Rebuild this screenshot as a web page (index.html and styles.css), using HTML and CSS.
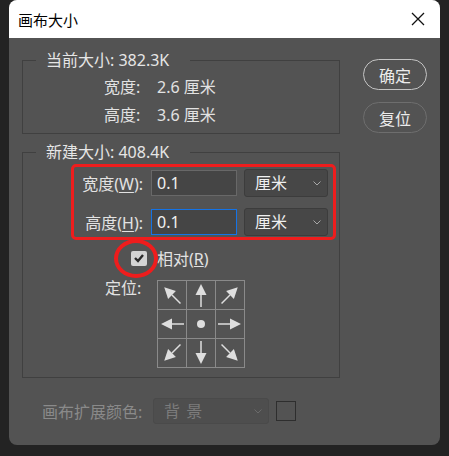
FILE: index.html
```html
<!DOCTYPE html>
<html lang="zh-CN">
<head>
	<meta charset="UTF-8">
	<title>画布大小</title>
	<link rel="stylesheet" href="styles.css">
</head>
<body>
	<div class="dialog">
		<!-- title -->
		<div class="dialog-title">
			<span>画布大小</span>
			<svg class="close" width="14" height="14" viewBox="0 0 14 14">
				<path d="M1 1 L13 13 M13 1 L1 13" stroke="#111" stroke-width="1.3" fill="none"/>
			</svg>
		</div>

		<div class="dialog-body">
			<div class="main">
				<!-- 当前大小 -->
				<fieldset class="group group-current">
					<legend>当前大小: 382.3K</legend>
					<div class="info-row"><span class="info-label">宽度:</span><span>2.6 厘米</span></div>
					<div class="info-row"><span class="info-label">高度:</span><span>3.6 厘米</span></div>
				</fieldset>

				<!-- 新建大小 -->
				<fieldset class="group group-new">
					<legend>新建大小: 408.4K</legend>
					<div class="mark-box">
						<div class="field-row">
							<span class="field-label">宽度(<u>W</u>):</span>
							<div class="input">0.1</div>
							<div class="select">厘米
								<svg class="chevron" width="8" height="5" viewBox="0 0 8 5"><path d="M0.5 0.5 L4 4 L7.5 0.5" stroke="#a8a8a8" fill="none"/></svg>
							</div>
						</div>
						<div class="field-row">
							<span class="field-label">高度(<u>H</u>):</span>
							<div class="input input-focus">0.1</div>
							<div class="select">厘米
								<svg class="chevron" width="8" height="5" viewBox="0 0 8 5"><path d="M0.5 0.5 L4 4 L7.5 0.5" stroke="#a8a8a8" fill="none"/></svg>
							</div>
						</div>
					</div>

					<div class="check-row">
						<span class="checkbox">
							<svg width="12" height="10" viewBox="0 0 12 10"><path d="M2 5 L5 8 L10 2" stroke="#2b2b2b" stroke-width="2.4" fill="none"/></svg>
							<span class="mark-circle"></span>
						</span>
						<span>相对(<u>R</u>)</span>
					</div>

					<div class="anchor-row">
						<span class="anchor-label">定位:</span>
						<div class="anchor-grid">
							<div class="cell"><svg width="28" height="28" viewBox="0 0 28 28"><g transform="rotate(-45 14 14)"><path d="M14 14 L14 26" class="shaft"/><path d="M14 3 L19.5 14 L8.5 14 Z" class="head"/></g></svg></div>
							<div class="cell"><svg width="28" height="28" viewBox="0 0 28 28"><g><path d="M14 14 L14 26" class="shaft"/><path d="M14 3 L19.5 14 L8.5 14 Z" class="head"/></g></svg></div>
							<div class="cell"><svg width="28" height="28" viewBox="0 0 28 28"><g transform="rotate(45 14 14)"><path d="M14 14 L14 26" class="shaft"/><path d="M14 3 L19.5 14 L8.5 14 Z" class="head"/></g></svg></div>
							<div class="cell"><svg width="28" height="28" viewBox="0 0 28 28"><g transform="rotate(-90 14 14)"><path d="M14 14 L14 26" class="shaft"/><path d="M14 3 L19.5 14 L8.5 14 Z" class="head"/></g></svg></div>
							<div class="cell"><svg width="28" height="28" viewBox="0 0 28 28"><circle cx="14" cy="14" r="4" class="head"/></svg></div>
							<div class="cell"><svg width="28" height="28" viewBox="0 0 28 28"><g transform="rotate(90 14 14)"><path d="M14 14 L14 26" class="shaft"/><path d="M14 3 L19.5 14 L8.5 14 Z" class="head"/></g></svg></div>
							<div class="cell"><svg width="28" height="28" viewBox="0 0 28 28"><g transform="rotate(-135 14 14)"><path d="M14 14 L14 26" class="shaft"/><path d="M14 3 L19.5 14 L8.5 14 Z" class="head"/></g></svg></div>
							<div class="cell"><svg width="28" height="28" viewBox="0 0 28 28"><g transform="rotate(180 14 14)"><path d="M14 14 L14 26" class="shaft"/><path d="M14 3 L19.5 14 L8.5 14 Z" class="head"/></g></svg></div>
							<div class="cell"><svg width="28" height="28" viewBox="0 0 28 28"><g transform="rotate(135 14 14)"><path d="M14 14 L14 26" class="shaft"/><path d="M14 3 L19.5 14 L8.5 14 Z" class="head"/></g></svg></div>
						</div>
					</div>
				</fieldset>

				<!-- 画布扩展颜色 -->
				<div class="ext-row">
					<span class="ext-label">画布扩展颜色:</span>
					<div class="select select-disabled">背 景
						<svg class="chevron" width="8" height="5" viewBox="0 0 8 5"><path d="M0.5 0.5 L4 4 L7.5 0.5" stroke="#6a6a6a" fill="none"/></svg>
					</div>
					<span class="swatch"></span>
				</div>
			</div>

			<!-- buttons -->
			<div class="actions">
				<button class="btn btn-primary">确定</button>
				<button class="btn">复位</button>
			</div>
		</div>
	</div>
</body>
</html>
```

FILE: styles.css
```css
html,
body {
	margin: 0;
	padding: 0;
}

body {
	background: #232323;
	padding: 0 9px;
	font-family: "Noto Sans", "Noto Sans CJK SC", sans-serif;
	font-size: 16px;
	color: #e2e2e2;
}

* {
	box-sizing: border-box;
}

/* dialog */
.dialog {
	height: 445px;
	background: #535353;
	border-radius: 8px;
	overflow: hidden;
}

.dialog-title {
	height: 38px;
	background: #fff;
	display: flex;
	align-items: center;
	justify-content: space-between;
	padding: 0 15px 0 9px;
	font-size: 15px;
	color: #000;
}

.close {
	display: block;
	margin-top: -1px;
}

.dialog-body {
	display: flex;
	padding: 0 13px;
}

.main {
	width: 318px;
}

/* 分组框 */
.group {
	margin: 11px 0 0;
	padding: 2px 0 4px;
	border: 1px solid #404040;
	min-width: 0;
}

.group legend {
	width: 154px;
	margin-left: 13px;
	padding: 0 0 0 10px;
	line-height: 22px;
	height: 22px;
	color: #e6e6e6;
}

.group-new {
	margin-top: 7px;
	padding: 1px 0 9px;
}

.info-row {
	display: flex;
	line-height: 28px;
	padding-left: 81px;
}

.info-label {
	width: 53px;
}

/* 红框 */
.mark-box {
	margin: 0 3px 0 48px;
	border: 3px solid #ee1d1d;
	border-radius: 5px;
	padding: 1px 0 0;
}

.field-row {
	display: flex;
	align-items: center;
	height: 30px;
}

.field-row + .field-row {
	margin-top: 9px;
}

.field-label {
	width: 72px;
	margin-right: 5px;
	text-align: right;
	padding-right: 3px;
	white-space: nowrap;
}

.field-label u {
	text-underline-offset: 2px;
}

.input {
	width: 86px;
	height: 26px;
	background: #454545;
	border: 1px solid #686868;
	padding-left: 5px;
	line-height: 24px;
	color: #f0f0f0;
}

.input-focus {
	border-color: #1473e6;
}

.select {
	position: relative;
	width: 84px;
	height: 28px;
	margin-left: 7px;
	background: #474747;
	border: 1px solid #3c3c3c;
	border-radius: 3px;
	padding-left: 10px;
	line-height: 26px;
	color: #f0f0f0;
}

.chevron {
	position: absolute;
	right: 6px;
	top: 11px;
}

/* 相对 */
.check-row {
	display: flex;
	align-items: center;
	height: 22px;
	margin-top: 7px;
	padding-left: 108px;
}

.checkbox {
	position: relative;
	width: 16px;
	height: 15px;
	margin-right: 10px;
	background: #d4d4d4;
	border-radius: 2px;
	display: flex;
	align-items: center;
	justify-content: center;
}

.mark-circle {
	position: absolute;
	left: -17px;
	top: -12px;
	width: 44px;
	height: 39px;
	border: 4px solid #ee1d1d;
	border-radius: 50%;
}

/* 定位 */
.anchor-row {
	display: flex;
	align-items: flex-start;
	margin-top: 8px;
	padding-left: 82px;
}

.anchor-label {
	width: 52px;
	line-height: 22px;
}

.anchor-grid {
	margin-top: 3px;
	display: grid;
	grid-template-columns: repeat(3, 29px);
	border-left: 1px solid #8a8a8a;
	border-top: 1px solid #8a8a8a;
}

.cell {
	height: 29px;
	border-right: 1px solid #8a8a8a;
	border-bottom: 1px solid #8a8a8a;
}

.cell svg {
	display: block;
}

.shaft {
	stroke: #dedede;
	stroke-width: 1.5;
	fill: none;
}

.head {
	fill: #dedede;
}

/* 扩展颜色 */
.ext-row {
	display: flex;
	align-items: center;
	margin-top: 20px;
	padding-left: 20px;
	color: #8a8a8a;
}

.ext-label {
	width: 111px;
	white-space: nowrap;
}

.select-disabled {
	width: 116px;
	height: 26px;
	margin-left: 0;
	background: #4e4e4e;
	border-color: #4a4a4a;
	color: #7c7c7c;
	line-height: 24px;
	letter-spacing: 1px;
}

.select-disabled .chevron {
	top: 10px;
}

.swatch {
	width: 20px;
	height: 20px;
	margin-left: 7px;
	border: 1px solid #2e2e2e;
}

/* buttons */
.actions {
	display: flex;
	flex-direction: column;
	gap: 12px;
	margin-top: 21px;
	margin-left: 23px;
}

.btn {
	width: 64px;
	height: 31px;
	background: transparent;
	border: 1.5px solid #6e6e6e;
	border-radius: 16px;
	color: #ececec;
	font-family: inherit;
	font-size: 16px;
	padding: 0;
	cursor: pointer;
}

.btn-primary {
	border-color: #c4c4c4;
}
```
